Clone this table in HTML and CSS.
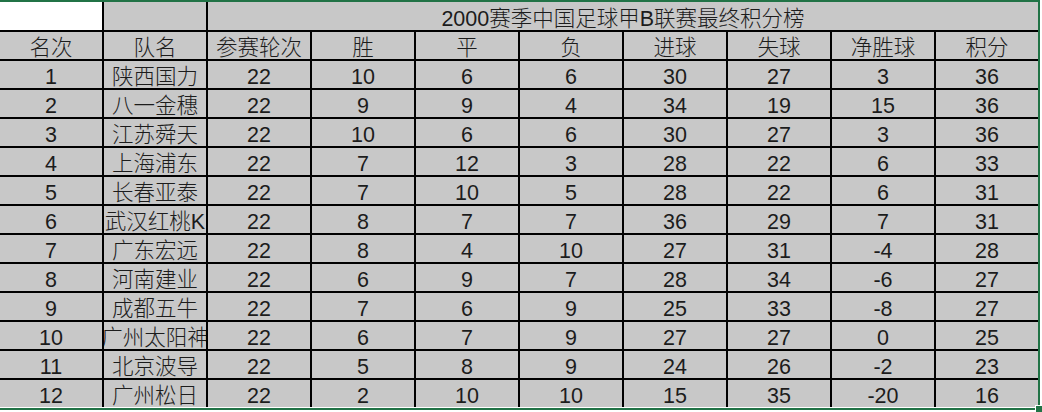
FILE: index.html
```html
<!DOCTYPE html>
<html lang="zh-CN">
<head>
<meta charset="utf-8">
<title>2000赛季中国足球甲B联赛最终积分榜</title>
<link rel="stylesheet" href="styles.css">
</head>
<body>
<div class="sheet">
  <div class="grid">
    <div class="cell blank"></div>
    <div class="cell"></div>
    <div class="cell title">2000赛季中国足球甲B联赛最终积分榜</div>

    <div class="cell">名次</div><div class="cell">队名</div><div class="cell">参赛轮次</div><div class="cell">胜</div><div class="cell">平</div><div class="cell">负</div><div class="cell">进球</div><div class="cell">失球</div><div class="cell">净胜球</div><div class="cell">积分</div>

    <div class="cell">1</div><div class="cell">陕西国力</div><div class="cell">22</div><div class="cell">10</div><div class="cell">6</div><div class="cell">6</div><div class="cell">30</div><div class="cell">27</div><div class="cell">3</div><div class="cell">36</div>
    <div class="cell">2</div><div class="cell">八一金穗</div><div class="cell">22</div><div class="cell">9</div><div class="cell">9</div><div class="cell">4</div><div class="cell">34</div><div class="cell">19</div><div class="cell">15</div><div class="cell">36</div>
    <div class="cell">3</div><div class="cell">江苏舜天</div><div class="cell">22</div><div class="cell">10</div><div class="cell">6</div><div class="cell">6</div><div class="cell">30</div><div class="cell">27</div><div class="cell">3</div><div class="cell">36</div>
    <div class="cell">4</div><div class="cell">上海浦东</div><div class="cell">22</div><div class="cell">7</div><div class="cell">12</div><div class="cell">3</div><div class="cell">28</div><div class="cell">22</div><div class="cell">6</div><div class="cell">33</div>
    <div class="cell">5</div><div class="cell">长春亚泰</div><div class="cell">22</div><div class="cell">7</div><div class="cell">10</div><div class="cell">5</div><div class="cell">28</div><div class="cell">22</div><div class="cell">6</div><div class="cell">31</div>
    <div class="cell">6</div><div class="cell">武汉红桃K</div><div class="cell">22</div><div class="cell">8</div><div class="cell">7</div><div class="cell">7</div><div class="cell">36</div><div class="cell">29</div><div class="cell">7</div><div class="cell">31</div>
    <div class="cell">7</div><div class="cell">广东宏远</div><div class="cell">22</div><div class="cell">8</div><div class="cell">4</div><div class="cell">10</div><div class="cell">27</div><div class="cell">31</div><div class="cell">-4</div><div class="cell">28</div>
    <div class="cell">8</div><div class="cell">河南建业</div><div class="cell">22</div><div class="cell">6</div><div class="cell">9</div><div class="cell">7</div><div class="cell">28</div><div class="cell">34</div><div class="cell">-6</div><div class="cell">27</div>
    <div class="cell">9</div><div class="cell">成都五牛</div><div class="cell">22</div><div class="cell">7</div><div class="cell">6</div><div class="cell">9</div><div class="cell">25</div><div class="cell">33</div><div class="cell">-8</div><div class="cell">27</div>
    <div class="cell">10</div><div class="cell">广州太阳神</div><div class="cell">22</div><div class="cell">6</div><div class="cell">7</div><div class="cell">9</div><div class="cell">27</div><div class="cell">27</div><div class="cell">0</div><div class="cell">25</div>
    <div class="cell">11</div><div class="cell">北京波导</div><div class="cell">22</div><div class="cell">5</div><div class="cell">8</div><div class="cell">9</div><div class="cell">24</div><div class="cell">26</div><div class="cell">-2</div><div class="cell">23</div>
    <div class="cell">12</div><div class="cell">广州松日</div><div class="cell">22</div><div class="cell">2</div><div class="cell">10</div><div class="cell">10</div><div class="cell">15</div><div class="cell">35</div><div class="cell">-20</div><div class="cell">16</div>
  </div>
  <div class="selection"><span class="handle"></span></div>
</div>
</body>
</html>
```
FILE: styles.css
```css
html, body {
  margin: 0;
  padding: 0;
  background: #ffffff;
}

.sheet {
  position: relative;
  width: 1042px;
  height: 412px;
  overflow: hidden;
  background: #ffffff;
}

.grid {
  display: grid;
  grid-template-columns: repeat(10, 102px);
  grid-template-rows: 30px repeat(13, 27px);
  gap: 2px;
  width: 1038px;
  background: #000000;
  font-family: "Liberation Sans", "Noto Sans CJK SC", sans-serif;
  font-weight: 300;
  font-size: 21.5px;
  color: #1c1c1c;
}

.cell {
  background: #c8c8c8;
  display: flex;
  align-items: flex-start;
  justify-content: center;
  white-space: nowrap;
  overflow: hidden;
  line-height: 27px;
  padding-top: 3px;
}

.blank {
  background: #ffffff;
}

.title {
  grid-column: 3 / span 8;
  line-height: 28px;
  padding-top: 5px;
}

.selection {
  position: absolute;
  left: -3px;
  top: 0;
  width: 1039px;
  height: 406px;
  border: 2px solid #217346;
}

.handle {
  position: absolute;
  right: -5px;
  bottom: -5px;
  width: 6px;
  height: 6px;
  background: #217346;
  border: 1px solid #ffffff;
}
```
